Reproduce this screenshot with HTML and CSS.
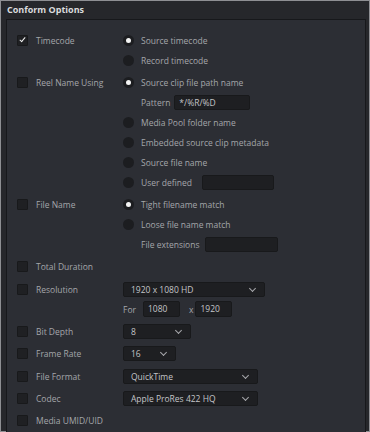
FILE: index.html
```html
<!DOCTYPE html>
<html lang="en">
<head>
    <meta charset="UTF-8">
    <title>Conform Options</title>
    <link rel="stylesheet" href="styles.css">
</head>
<body>

<div class="window">
    <div class="title">Conform Options</div>
    <div class="panel">
        <div class="group">
            <div class="opt-left"><span class="check on"></span>Timecode</div>
            <div class="opt-right">
                <div class="line"><span class="radio on"></span>Source timecode</div>
                <div class="line"><span class="radio"></span>Record timecode</div>
            </div>
        </div>
        <div class="group">
            <div class="opt-left"><span class="check"></span>Reel Name Using</div>
            <div class="opt-right">
                <div class="line"><span class="radio on"></span>Source clip file path name</div>
                <div class="line sub"><span class="sub-label">Pattern</span><span class="field pattern">*/%R/%D</span></div>
                <div class="line"><span class="radio"></span>Media Pool folder name</div>
                <div class="line"><span class="radio"></span>Embedded source clip metadata</div>
                <div class="line"><span class="radio"></span>Source file name</div>
                <div class="line"><span class="radio"></span>User defined<span class="field user"></span></div>
            </div>
        </div>
        <div class="group">
            <div class="opt-left"><span class="check"></span>File Name</div>
            <div class="opt-right">
                <div class="line"><span class="radio on"></span>Tight filename match</div>
                <div class="line"><span class="radio"></span>Loose file name match</div>
                <div class="line sub"><span class="sub-label">File extensions</span><span class="field ext"></span></div>
            </div>
        </div>
        <div class="group">
            <div class="opt-left"><span class="check"></span>Total Duration</div>
        </div>
        <div class="group">
            <div class="opt-left"><span class="check"></span>Resolution</div>
            <div class="opt-right">
                <div class="line"><span class="select res">1920 x 1080 HD<i class="chev"></i></span></div>
                <div class="line"><span class="for">For</span><span class="field size">1080</span><span class="times">x</span><span class="field size">1920</span></div>
            </div>
        </div>
        <div class="group">
            <div class="opt-left"><span class="check"></span>Bit Depth</div>
            <div class="opt-right">
                <div class="line"><span class="select bits">8<i class="chev"></i></span></div>
            </div>
        </div>
        <div class="group">
            <div class="opt-left"><span class="check"></span>Frame Rate</div>
            <div class="opt-right">
                <div class="line"><span class="select rate">16<i class="chev"></i></span></div>
            </div>
        </div>
        <div class="group">
            <div class="opt-left"><span class="check"></span>File Format</div>
            <div class="opt-right">
                <div class="line"><span class="select wide">QuickTime<i class="chev"></i></span></div>
            </div>
        </div>
        <div class="group">
            <div class="opt-left"><span class="check"></span>Codec</div>
            <div class="opt-right">
                <div class="line"><span class="select wide">Apple ProRes 422 HQ<i class="chev"></i></span></div>
            </div>
        </div>
        <div class="group">
            <div class="opt-left"><span class="check"></span>Media UMID/UID</div>
        </div>
    </div>
</div>

</body>
</html>
```

FILE: styles.css
```css
body {
    margin: 0;
    background-color: #d4d4d4;
    font-family: "Open Sans", "Noto Sans", sans-serif;
}
.window {
    width: 368px;
    height: 430px;
    border: 1px solid #8e8f93;
    background-color: #26272b;
    display: flex;
    flex-direction: column;
}
.title {
    height: 21px;
    line-height: 18px;
    padding-left: 6px;
    font-size: 9px;
    font-weight: 700;
    color: #dadbdd;
}
.panel {
    flex: 1;
    margin: 0 3px 2px 5px;
    border: 1px solid #17181b;
    background-color: #2c2e34;
    padding: 10px 0 0 10px;
    font-size: 8.5px;
    color: #a4a6aa;
}
.group {
    display: flex;
    margin-bottom: 2.3px;
}
.opt-left {
    width: 106px;
    height: 20px;
    display: flex;
    align-items: center;
}
.opt-right {
    display: flex;
    flex-direction: column;
}
.line {
    height: 20px;
    display: flex;
    align-items: center;
}
.check {
    width: 9px;
    height: 9px;
    margin-right: 8px;
    border: 1px solid #18191b;
    border-radius: 1px;
    background-color: #1f2023;
    position: relative;
}
/* white tick for checked boxes */
.check.on::after {
    content: "";
    position: absolute;
    left: 3px;
    top: 0px;
    width: 2px;
    height: 5px;
    border: solid #f2f2f2;
    border-width: 0 1.5px 1.5px 0;
    transform: rotate(40deg);
}
.radio {
    width: 11px;
    height: 11px;
    margin-right: 7px;
    border-radius: 50%;
    background-color: #1c1d20;
    display: flex;
    align-items: center;
    justify-content: center;
}
.radio.on::after {
    content: "";
    width: 5px;
    height: 5px;
    border-radius: 50%;
    background-color: #f4f4f4;
}
.sub-label {
    margin-left: 18px;
}
.field {
    height: 13px;
    line-height: 13px;
    border: 1px solid #18191b;
    border-radius: 2px;
    background-color: #1e1f22;
    color: #c4c5c8;
    padding-left: 4px;
    box-sizing: content-box;
}
.field.pattern {
    width: 70px;
    margin-left: 4px;
}
.field.user {
    width: 66px;
    margin-left: 10px;
}
.field.ext {
    width: 67px;
    margin-left: 6px;
}
.for {
    margin-right: 7px;
}
.field.size {
    width: 31px;
    height: 14px;
    line-height: 14px;
}
.times {
    margin: 0 2px 0 9px;
}
.select {
    height: 13px;
    line-height: 13px;
    border: 1px solid #18191b;
    border-radius: 2px;
    background-color: #1e1f22;
    color: #c4c5c8;
    padding-left: 7px;
    position: relative;
}
.select.res { width: 133px; }
.select.bits { width: 59px; }
.select.rate { width: 44px; }
.select.wide { width: 126px; }
.chev {
    position: absolute;
    right: 9px;
    top: 3px;
    width: 4px;
    height: 4px;
    border: solid #a8a9ac;
    border-width: 0 1px 1px 0;
    transform: rotate(45deg);
}
```
